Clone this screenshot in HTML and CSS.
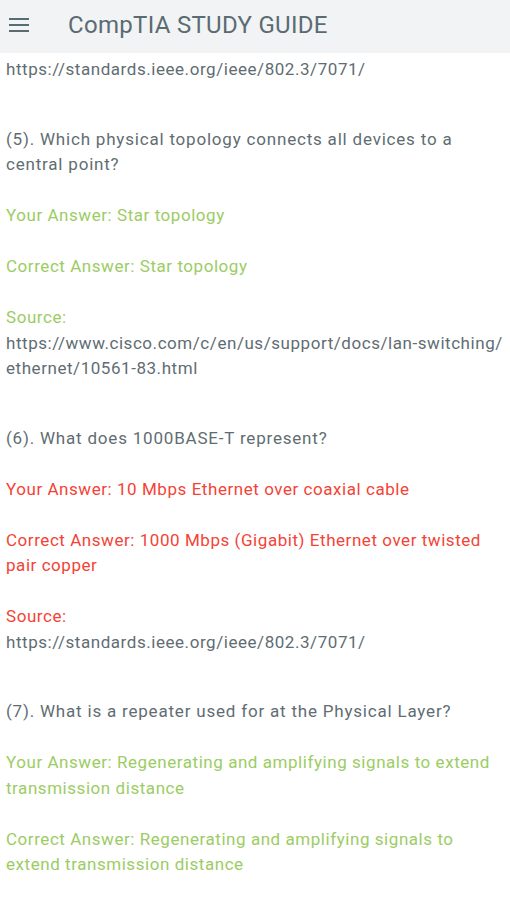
FILE: index.html
```html
<!DOCTYPE html>
<html>
<head>
<meta charset="utf-8">
<link rel="stylesheet" href="styles.css">
</head>
<body>
<header class="bar">
  <svg class="menu" width="20" height="14" viewBox="0 0 20 14">
    <rect x="0" y="0" width="20" height="2" fill="#5b6b73"/>
    <rect x="0" y="6" width="20" height="2" fill="#5b6b73"/>
    <rect x="0" y="12" width="20" height="2" fill="#5b6b73"/>
  </svg>
  <h1 class="title">CompTIA STUDY GUIDE</h1>
</header>
<main class="content">
  <section class="q">
    <p class="url">https://standards.ieee.org/ieee/802.3/7071/</p>
  </section>
  <section class="q">
    <p class="ques">(5). Which physical topology connects all devices to a central point?</p>
    <p class="ok">Your Answer: Star topology</p>
    <p class="ok">Correct Answer: Star topology</p>
    <p><span class="ok">Source:</span><br><span class="url">https://www.cisco.com/c/en/us/support/docs/lan-switching/</span><br><span class="url">ethernet/10561-83.html</span></p>
  </section>
  <section class="q">
    <p class="ques">(6). What does 1000BASE-T represent?</p>
    <p class="bad">Your Answer: 10 Mbps Ethernet over coaxial cable</p>
    <p class="bad">Correct Answer: 1000 Mbps (Gigabit) Ethernet over twisted pair copper</p>
    <p><span class="bad">Source:</span><br><span class="url">https://standards.ieee.org/ieee/802.3/7071/</span></p>
  </section>
  <section class="q">
    <p class="ques">(7). What is a repeater used for at the Physical Layer?</p>
    <p class="ok">Your Answer: Regenerating and amplifying signals to extend transmission distance</p>
    <p class="ok">Correct Answer: Regenerating and amplifying signals to extend transmission distance</p>
  </section>
</main>
</body>
</html>
```
FILE: styles.css
```css
html, body {
  margin: 0;
  padding: 0;
  background: #ffffff;
}
body {
  font-family: Roboto, "Noto Sans", sans-serif;
  color: #5f6d73;
  width: 510px;
  overflow: hidden;
}
.bar {
  height: 53px;
  background: #f1f3f4;
  display: flex;
  align-items: center;
}
.menu {
  margin-left: 9px;
  margin-top: -3px;
}
.title {
  margin: 0 0 0 39px;
  font-size: 24px;
  font-weight: 400;
  color: #5b6b73;
  letter-spacing: 0.3px;
  margin-top: -4px;
}
.content {
  padding: 4px 8px 0 6px;
  font-size: 17px;
  line-height: 25.5px;
  letter-spacing: 0.55px;
}
.ques {
  letter-spacing: 0.8px;
}
.url {
  white-space: nowrap;
}
.q {
  margin: 0 0 44px 0;
}
.q p {
  margin: 0 0 25.5px 0;
}
.q p:last-child {
  margin-bottom: 0;
}
.ok {
  color: #9ccc65;
}
.bad {
  color: #f44336;
}
```
